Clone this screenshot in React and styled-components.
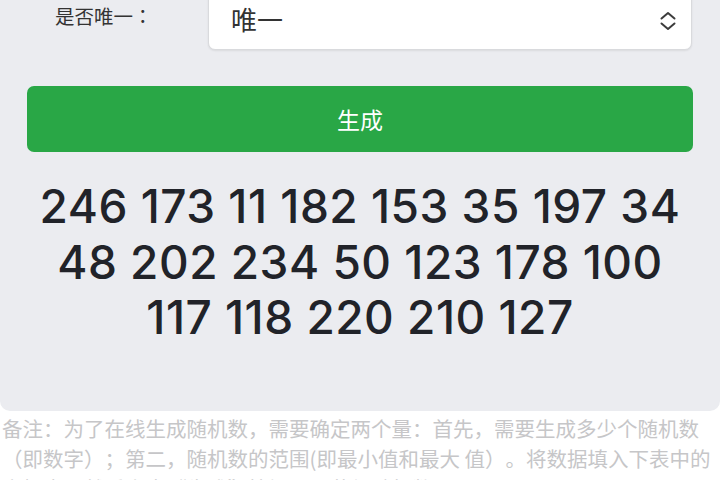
import React from 'react';
import styled, { createGlobalStyle } from 'styled-components';

const GlobalStyle = createGlobalStyle`
  html, body {
    margin: 0;
    padding: 0;
    background: #fff;
  }
  body {
    font-family: "Noto Sans CJK SC", "Noto Sans", sans-serif;
    text-spacing-trim: space-all;
    overflow: hidden;
  }
`;

const Panel = styled.div`
  margin-top: -14px;
  background: #ebecf0;
  border-radius: 0 0 10px 10px;
  padding: 0 27px 65px;
`;

const FieldRow = styled.div`
  display: flex;
  align-items: flex-start;
  height: 64px;
`;

const Label = styled.label`
  width: 181px;
  box-sizing: border-box;
  padding: 16px 0 0 28px;
  font-family: "Noto Sans CJK TC", "Noto Sans CJK SC", sans-serif;
  font-size: 19.5px;
  line-height: 28px;
  color: #333;
`;

const SelectBox = styled.div`
  flex: 1;
  height: 64px;
  box-sizing: border-box;
  display: flex;
  align-items: center;
  justify-content: space-between;
  padding: 0 14px 0 22px;
  background: #fff;
  border: 1px solid #d9dadd;
  border-radius: 0 0 7px 7px;
  box-shadow: 0 1px 2px rgba(0, 0, 0, 0.08);
  margin-right: 1px;
`;

const SelectValue = styled.span`
  font-size: 26px;
  color: #333;
`;

const Chevron = styled.svg`
  width: 18px;
  height: 20px;
  margin-top: 6px;
`;

const GenerateButton = styled.button`
  display: block;
  width: 100%;
  height: 66px;
  margin-top: 36px;
  border: none;
  border-radius: 7px;
  background: #29a746;
  color: #fff;
  font-family: "Noto Sans CJK SC", sans-serif;
  font-size: 23px;
  cursor: pointer;
`;

const Result = styled.div`
  margin-top: 27px;
  padding: 0 8px;
  text-align: center;
  font-family: Inter, "Liberation Sans", sans-serif;
  font-weight: 500;
  font-size: 46px;
  line-height: 55.5px;
  color: #212329;
  letter-spacing: 0.5px;
`;

const Note = styled.p`
  margin: 0;
  padding: 2px 2px 0;
  font-size: 20.5px;
  line-height: 30px;
  color: #c6c6c8;
`;

const numbers = [246, 173, 11, 182, 153, 35, 197, 34, 48, 202, 234, 50, 123, 178, 100, 117, 118, 220, 210, 127];

export default function App() {
  return (
    <>
      <GlobalStyle />
      <Panel>
        <FieldRow>
          <Label>是否唯一：</Label>
          <SelectBox>
            <SelectValue>唯一</SelectValue>
            <Chevron viewBox="0 0 18 20" fill="none" stroke="#3c3c3c" strokeWidth="2" strokeLinecap="round" strokeLinejoin="round">
              <path d="M2.5 7.5 L9 2 L15.5 7.5" />
              <path d="M2.5 12.5 L9 18 L15.5 12.5" />
            </Chevron>
          </SelectBox>
        </FieldRow>
        <GenerateButton>生成</GenerateButton>
        <Result>{numbers.join(' ')}</Result>
      </Panel>
      <Note>
        备注：为了在线生成随机数，需要确定两个量：首先，需要生成多少个随机数（即数字）；第二，随机数的范围(即最小值和最大 值）。将数据填入下表中的方框内，然后点击“生成”按钮即可获得随机数。
      </Note>
    </>
  );
}
